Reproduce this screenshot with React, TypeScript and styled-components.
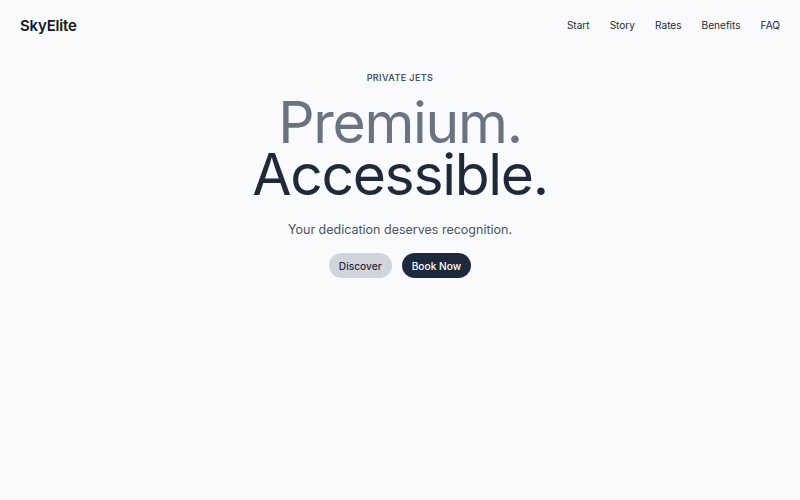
import React from "react";
import styled, { createGlobalStyle } from "styled-components";

const Global = createGlobalStyle`
  html, body { margin: 0; padding: 0; background: #f8fafc; }
  body { font-family: Inter, "Noto Sans", sans-serif; color: #111827; -webkit-font-smoothing: antialiased; }
`;

const Page = styled.div`
  min-height: 500px;
  background: #f8fafc;
`;

const Header = styled.header`
  display: flex;
  align-items: center;
  justify-content: space-between;
  height: 50px;
  padding: 0 20px;
`;

const Logo = styled.div`
  font-size: 15px;
  font-weight: 600;
  color: #111827;
  letter-spacing: -0.2px;
`;

const Nav = styled.nav`
  display: flex;
  gap: 20px;
`;

const NavLink = styled.a`
  font-size: 10.1px;
  color: #1f2937;
  text-decoration: none;
`;

const Hero = styled.section`
  display: flex;
  flex-direction: column;
  align-items: center;
  padding-top: 22px;
`;

const Eyebrow = styled.div`
  font-size: 9px;
  font-weight: 600;
  letter-spacing: 0.4px;
  color: #4b5563;
  text-transform: uppercase;
`;

const Title = styled.h1`
  margin: 14px 0 0;
  font-size: 57px;
  font-weight: 400;
  line-height: 52px;
  letter-spacing: -1.3px;
  text-align: center;
`;

const Line = styled.span<{ $muted?: boolean }>`
  display: block;
  color: ${(p) => (p.$muted ? "#6b7280" : "#1f2937")};
`;

const Sub = styled.p`
  margin: 21px 0 0;
  font-size: 12.5px;
  color: #4b5563;
`;

const Actions = styled.div`
  display: flex;
  gap: 10px;
  margin-top: 16px;
`;

const Button = styled.button<{ $dark?: boolean }>`
  height: 25px;
  padding: 0 10px;
  border: none;
  border-radius: 999px;
  font-family: inherit;
  font-size: 10.2px;
  font-weight: 500;
  background: ${(p) => (p.$dark ? "#1e293b" : "#d1d5db")};
  color: ${(p) => (p.$dark ? "#ffffff" : "#1f2937")};
  cursor: pointer;
`;

export default function App() {
  return (
    <Page>
      <Global />
      <Header>
        <Logo>SkyElite</Logo>
        <Nav>
          {["Start", "Story", "Rates", "Benefits", "FAQ"].map((l) => (
            <NavLink key={l} href="#">
              {l}
            </NavLink>
          ))}
        </Nav>
      </Header>
      <Hero>
        <Eyebrow>Private Jets</Eyebrow>
        <Title>
          <Line $muted>Premium.</Line>
          <Line>Accessible.</Line>
        </Title>
        <Sub>Your dedication deserves recognition.</Sub>
        <Actions>
          <Button>Discover</Button>
          <Button $dark>Book Now</Button>
        </Actions>
      </Hero>
    </Page>
  );
}
